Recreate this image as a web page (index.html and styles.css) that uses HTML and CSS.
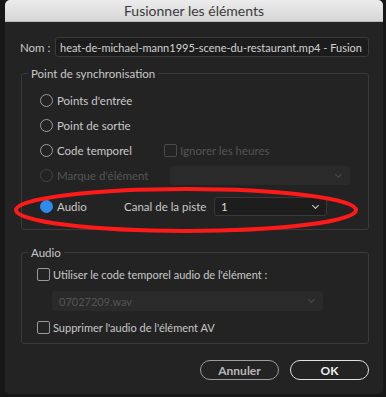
FILE: index.html
```html
<!DOCTYPE html>
<html lang="fr">
<head>
    <meta charset="UTF-8">
    <title>Fusionner les éléments</title>
    <link rel="stylesheet" href="styles.css">
</head>
<body>
    <div class="dialog">
        <div class="title-bar">Fusionner les éléments</div>
        <div class="dialog-body">
            <div class="name-row">
                <span class="name-label">Nom :</span>
                <div class="text-field">heat-de-michael-mann1995-scene-du-restaurant.mp4 - Fusion</div>
            </div>

            <fieldset class="group sync-group">
                <legend>Point de synchronisation</legend>
                <div class="option-row">
                    <span class="radio"></span><span>Points d'entrée</span>
                </div>
                <div class="option-row">
                    <span class="radio"></span><span>Point de sortie</span>
                </div>
                <div class="option-row">
                    <span class="radio"></span><span class="option-text">Code temporel</span>
                    <span class="checkbox disabled"></span><span class="muted">Ignorer les heures</span>
                </div>
                <div class="option-row disabled-row">
                    <span class="radio disabled"></span><span class="option-text muted">Marque d'élément</span>
                    <div class="select select-marker disabled"><span></span><span class="chevron"></span></div>
                </div>
                <div class="option-row audio-row">
                    <span class="radio checked"></span><span class="audio-text">Audio</span>
                    <span class="track-label">Canal de la piste</span>
                    <div class="select select-track"><span>1</span><span class="chevron"></span></div>
                </div>
                <svg class="highlight" width="350" height="50" viewBox="0 0 350 50">
                    <ellipse cx="173" cy="24" rx="170" ry="21" fill="none" stroke="#ff1a1a" stroke-width="4"/>
                </svg>
            </fieldset>

            <fieldset class="group audio-group">
                <legend>Audio</legend>
                <div class="option-row">
                    <span class="checkbox"></span><span>Utiliser le code temporel audio de l'élément :</span>
                </div>
                <div class="select select-wav disabled"><span>07027209.wav</span><span class="chevron"></span></div>
                <div class="option-row">
                    <span class="checkbox"></span><span>Supprimer l'audio de l'élément AV</span>
                </div>
            </fieldset>

            <div class="button-row">
                <button class="btn">Annuler</button>
                <button class="btn btn-ok">OK</button>
            </div>
        </div>
    </div>
</body>
</html>
```

FILE: styles.css
```css
body {
    margin: 0;
    background-color: #171717;
    font-family: Lato, "Open Sans", Arial, sans-serif;
    font-size: 11px;
    color: #c9c9c9;
    width: 386px;
    height: 397px;
    overflow: hidden;
}
.dialog {
    margin-left: 5px;
    width: 378px;
    height: 394px;
    background-color: #232323;
    border-radius: 5px;
    overflow: hidden;
    display: flex;
    flex-direction: column;
}
.title-bar {
    height: 22px;
    line-height: 22px;
    background: linear-gradient(#ececec, #d6d6d6);
    color: #3a3a3a;
    text-align: center;
    font-size: 14px;
    border-bottom: 1px solid #b8b8b8;
    box-sizing: border-box;
}
.dialog-body {
    position: relative;
    padding: 15px 14px 0 15px;
    display: flex;
    flex-direction: column;
}
.name-row {
    display: flex;
    align-items: center;
    height: 20px;
    font-size: 11.5px;
}
.name-label {
    width: 35px;
}
.text-field {
    flex: 1;
    height: 20px;
    line-height: 19px;
    background-color: #1c1c1c;
    border: 1px solid #3a3a3a;
    border-radius: 3px;
    box-sizing: border-box;
    padding-left: 4px;
    white-space: nowrap;
    overflow: hidden;
    color: #d2d2d2;
    font-size: 11px;
}
.group {
    position: relative;
    margin: 0;
    padding: 0;
    border: 1px solid #3a3a3a;
    border-radius: 3px;
    margin-left: 1px;
    display: flex;
    flex-direction: column;
}
.group legend {
    padding: 0 3px;
    margin-left: -9px;
    color: #c9c9c9;
    font-size: 11.5px;
}
.sync-group {
    margin-top: 10px;
    height: 163px;
    padding: 8px 0 0 18px;
    box-sizing: border-box;
    font-size: 11.5px;
}
.sync-group legend {
    margin-left: -12px;
}
.option-row {
    display: flex;
    align-items: center;
    height: 25px;
}
.radio {
    width: 13px;
    height: 13px;
    border: 1.5px solid #9a9a9a;
    border-radius: 50%;
    box-sizing: border-box;
    margin-right: 4px;
}
.radio.checked {
    background-color: #2d8ceb;
    border-color: #2d8ceb;
}
.radio.disabled {
    border-color: #444;
}
.checkbox {
    width: 13px;
    height: 13px;
    border: 1.5px solid #9a9a9a;
    border-radius: 2px;
    box-sizing: border-box;
    margin-right: 3px;
}
.checkbox.disabled {
    border-color: #4a4a4a;
}
.option-text {
    width: 107px;
}
.muted {
    color: #555;
}
.audio-row {
    margin-top: 6px;
}
.audio-text {
    width: 67px;
}
.track-label {
    width: 90px;
}
.select {
    display: flex;
    align-items: center;
    justify-content: space-between;
    height: 19px;
    border: 1px solid #393939;
    border-radius: 3px;
    background-color: #1d1d1d;
    box-sizing: border-box;
    padding: 0 8px 0 6px;
    color: #d8d8d8;
}
.select.disabled {
    background-color: #2a2a2a;
    border-color: #2a2a2a;
    color: #555;
}
.chevron {
    width: 4px;
    height: 4px;
    border-right: 1.3px solid #cfcfcf;
    border-bottom: 1.3px solid #cfcfcf;
    transform: rotate(45deg);
    margin-top: -3px;
}
.select.disabled .chevron {
    border-color: #4e4e4e;
}
.select-marker {
    width: 180px;
    margin-left: 6px;
}
.select-track {
    width: 113px;
}
.highlight {
    position: absolute;
    left: -9px;
    top: 106px;
}
.audio-group {
    margin-top: 16px;
    height: 98px;
    padding: 7px 0 0 15px;
    box-sizing: border-box;
}
.audio-group .option-row {
    height: 17px;
}
.select-wav {
    width: 271px;
    margin: 8px 0 8px 15px;
    height: 20px;
}
.button-row {
    display: flex;
    justify-content: flex-end;
    gap: 11px;
    margin-top: 16px;
}
.btn {
    width: 79px;
    height: 20px;
    border: 1.5px solid #9c9c9c;
    border-radius: 10px;
    background-color: #232323;
    color: #b8b8b8;
    font-family: Lato, "Open Sans", Arial, sans-serif;
    font-size: 12px;
    font-weight: bold;
    padding: 0;
}
.btn-ok {
    border-color: #e0e0e0;
    color: #efefef;
}
```
